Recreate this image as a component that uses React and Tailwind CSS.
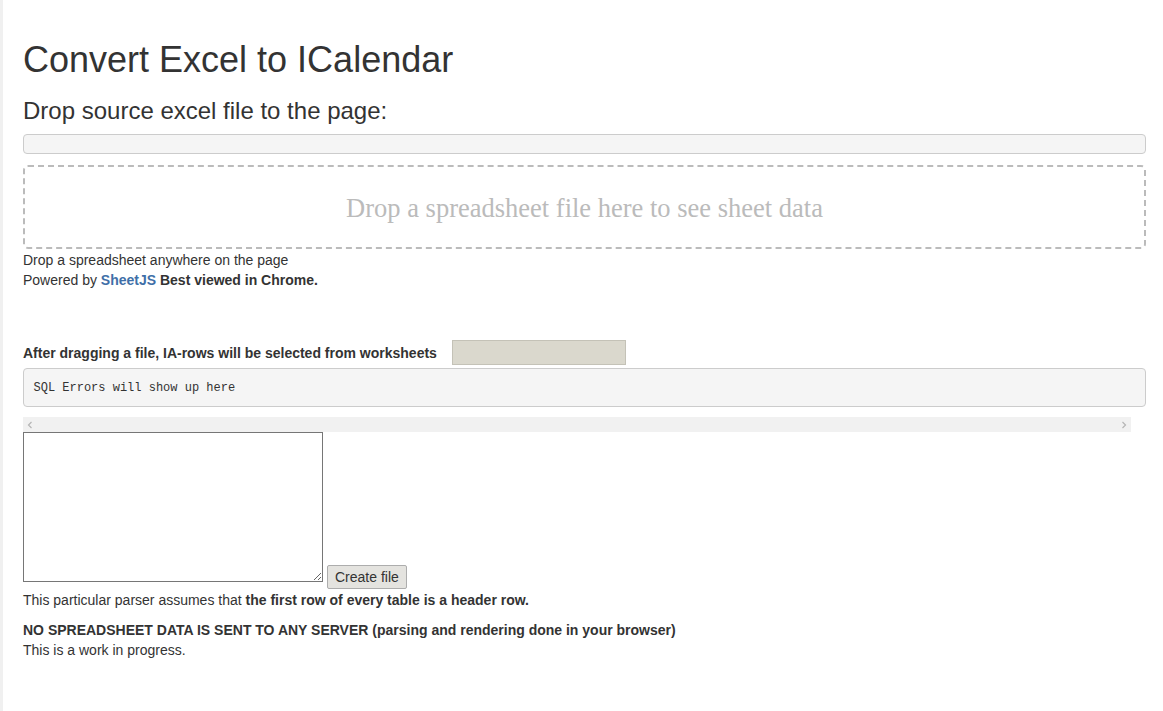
import React from 'react';

const sans = "font-['Liberation_Sans',Arial,sans-serif]";

const App = () => {
  return (
    <div className={`flex min-h-[711px] bg-white text-[#333] ${sans}`}>
      {/* left edge */}
      <div className="w-[3px] shrink-0 bg-[#f0f0f0]" />

      <div className="w-[1123px] ml-[20px] pt-[40px] text-[14px] leading-[20px]">
        <h1 className="text-[36px] leading-[39.6px] font-normal">Convert Excel to ICalendar</h1>
        <h3 className="mt-[18px] mb-[10px] text-[24px] leading-[26.4px] font-normal">Drop source excel file to the page:</h3>

        {/* empty status bar */}
        <div className="h-[20px] rounded-[4px] border border-[#ccc] bg-[#f5f5f5]" />

        {/* drop zone */}
        <div className="mt-[11px] h-[84px] rounded-[5px] border-2 border-dashed border-[#bbb] flex items-center justify-center">
          <span className="font-['Liberation_Serif','Times_New_Roman',serif] text-[26.5px] text-[#bbb] pt-[1px]">
            Drop a spreadsheet file here to see sheet data
          </span>
        </div>

        <div className="pt-[1px]">Drop a spreadsheet anywhere on the page</div>
        <div>
          Powered by <a className="font-bold text-[#3f6fa8]">SheetJS</a> <b>Best viewed in Chrome.</b>
        </div>

        {/* worksheet selector */}
        <div className="mt-[50px] flex items-center">
          <b className="text-[14px]">After dragging a file, IA-rows will be selected from worksheets</b>
          <div className="ml-[15px] w-[174px] h-[25px] bg-[#dad8cd] border border-[#c4c2b7]" />
        </div>

        {/* sql errors */}
        <pre className="mt-[3px] px-[9.5px] py-[9.5px] rounded-[4px] border border-[#ccc] bg-[#f5f5f5] font-['Liberation_Mono',Consolas,monospace] text-[12px] leading-[18px] text-[#333]">
          SQL Errors will show up here
        </pre>

        {/* horizontal scrollbar */}
        <div className="mt-[10px] w-[1108px] h-[15px] bg-[#f1f1f1] flex items-center justify-between px-[4px] text-[#b5b5b5]">
          <svg width="6" height="8" viewBox="0 0 6 8"><path d="M4.5 1 L1.5 4 L4.5 7" fill="none" stroke="currentColor" strokeWidth="1.2" /></svg>
          <svg width="6" height="8" viewBox="0 0 6 8"><path d="M1.5 1 L4.5 4 L1.5 7" fill="none" stroke="currentColor" strokeWidth="1.2" /></svg>
        </div>

        {/* output + button */}
        <div className="flex items-end gap-[4px]">
          <textarea className="w-[300px] h-[150px] border border-[#767676] bg-white resize block" />
          <button className="h-[24px] px-[7px] border border-[#adadad] bg-[#e4e3df] text-[14px] leading-[20px] text-[#333] rounded-[2px] mb-[-7px]">
            Create file
          </button>
        </div>

        <p className="mt-[8px] mb-[10px]">
          This particular parser assumes that <b>the first row of every table is a header row.</b>
        </p>
        <div className="font-bold">NO SPREADSHEET DATA IS SENT TO ANY SERVER (parsing and rendering done in your browser)</div>
        <div>This is a work in progress.</div>
      </div>
    </div>
  );
};

export default App;
